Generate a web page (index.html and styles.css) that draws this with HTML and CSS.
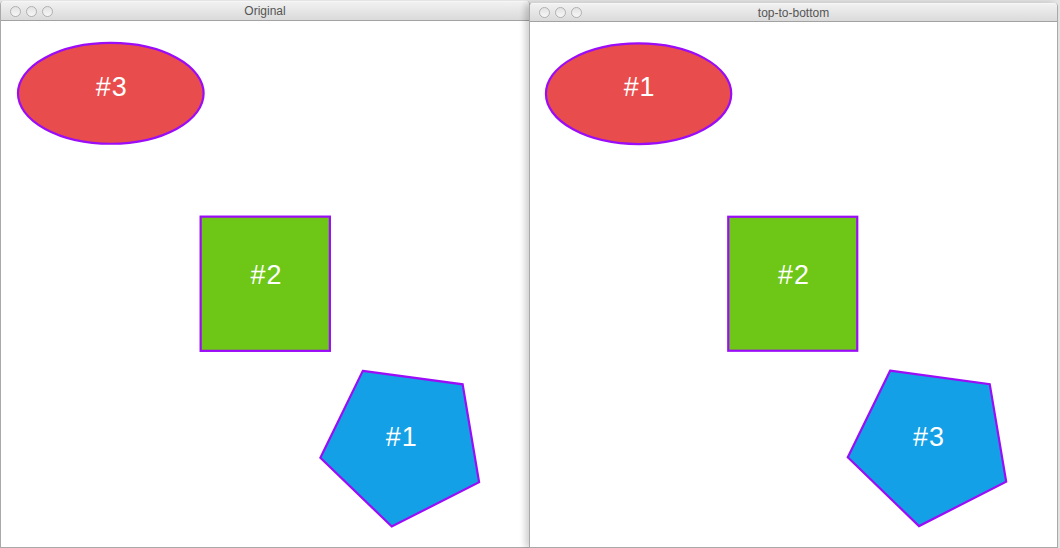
FILE: index.html
```html
<!DOCTYPE html>
<html>
<head>
<meta charset="utf-8">
<link rel="stylesheet" href="styles.css">
</head>
<body>
<div class="desk">
  <div class="win win-left">
    <div class="titlebar">
      <div class="lights"><span class="light"></span><span class="light"></span><span class="light"></span></div>
      <div class="title">Original</div>
    </div>
    <svg class="canvas" width="527" height="527" viewBox="0 0 527 527">
      <g class="shapes">
        <ellipse cx="109.5" cy="72.5" rx="93" ry="50.5" class="s-red"/>
        <rect x="199.5" y="196" width="129.5" height="134.5" class="s-green"/>
        <polygon points="362,350.5 462,364 478.5,462 391,506.5 319.5,437.5" class="s-blue"/>
        <text x="110.5" y="75" class="lbl">#3</text>
        <text x="265.5" y="264" class="lbl">#2</text>
        <text x="401" y="426" class="lbl">#1</text>
      </g>
    </svg>
  </div>
  <div class="win win-right">
    <div class="titlebar">
      <div class="lights"><span class="light"></span><span class="light"></span><span class="light"></span></div>
      <div class="title">top-to-bottom</div>
    </div>
    <svg class="canvas" width="527" height="527" viewBox="0 0 527 527">
      <g class="shapes" transform="translate(-1.5,-0.5)">
        <ellipse cx="109.5" cy="72.5" rx="93" ry="50.5" class="s-red"/>
        <rect x="199.5" y="196" width="129.5" height="134.5" class="s-green"/>
        <polygon points="362,350.5 462,364 478.5,462 391,506.5 319.5,437.5" class="s-blue"/>
        <text x="110.5" y="75" class="lbl">#1</text>
        <text x="265.5" y="264" class="lbl">#2</text>
        <text x="401" y="426" class="lbl">#3</text>
      </g>
    </svg>
  </div>
</div>
</body>
</html>
```

FILE: styles.css
```css
html, body {
  margin: 0;
  padding: 0;
  width: 1060px;
  height: 548px;
  overflow: hidden;
  background: #e4e4e4;
}
.desk {
  display: flex;
  align-items: flex-start;
  height: 548px;
}
.win {
  display: flex;
  flex-direction: column;
  background: #ffffff;
  border: 1px solid #a9a9a9;
  border-top: none;
  border-radius: 4px 4px 0 0;
  overflow: hidden;
  box-sizing: border-box;
}
.win-left {
  width: 530px;
  height: 547px;
  margin-top: 1px;
  position: relative;
  z-index: 1;
}
.win-right {
  width: 529px;
  height: 545px;
  margin-top: 3px;
  margin-left: -1px;
  position: relative;
  z-index: 2;
  box-shadow: -4px 0 6px rgba(0, 0, 0, 0.18);
}
.titlebar {
  height: 20px;
  flex: 0 0 20px;
  box-sizing: border-box;
  border-bottom: 1px solid #a2a2a2;
  border-top: 1px solid #f6f6f6;
  background: linear-gradient(#f1f1f1, #dadada);
  display: flex;
  align-items: center;
  position: relative;
}
.win-right .titlebar {
  height: 19px;
  flex-basis: 19px;
}
.lights {
  display: flex;
  gap: 5px;
  padding-left: 9px;
}
.light {
  width: 11px;
  height: 11px;
  border-radius: 50%;
  box-sizing: border-box;
  border: 1px solid #b0b0b0;
  background: linear-gradient(#e2e2e2, #f7f7f7);
}
.title {
  position: absolute;
  left: 0;
  right: 0;
  top: 0;
  bottom: 0;
  display: flex;
  align-items: center;
  justify-content: center;
  font-family: "Liberation Sans", Arial, sans-serif;
  font-size: 12px;
  color: #555555;
  line-height: 1;
}
.canvas {
  display: block;
}
.s-red {
  fill: #e94c4c;
  stroke: #9b0cf7;
  stroke-width: 2.2;
}
.s-green {
  fill: #6ec617;
  stroke: #9b0cf7;
  stroke-width: 2.2;
}
.s-blue {
  fill: #14a0e6;
  stroke: #9b0cf7;
  stroke-width: 2.2;
}
.lbl {
  fill: #ffffff;
  font-family: "Liberation Sans", Arial, sans-serif;
  font-size: 27px;
  font-weight: 400;
  text-anchor: middle;
  letter-spacing: 1px;
}
```
